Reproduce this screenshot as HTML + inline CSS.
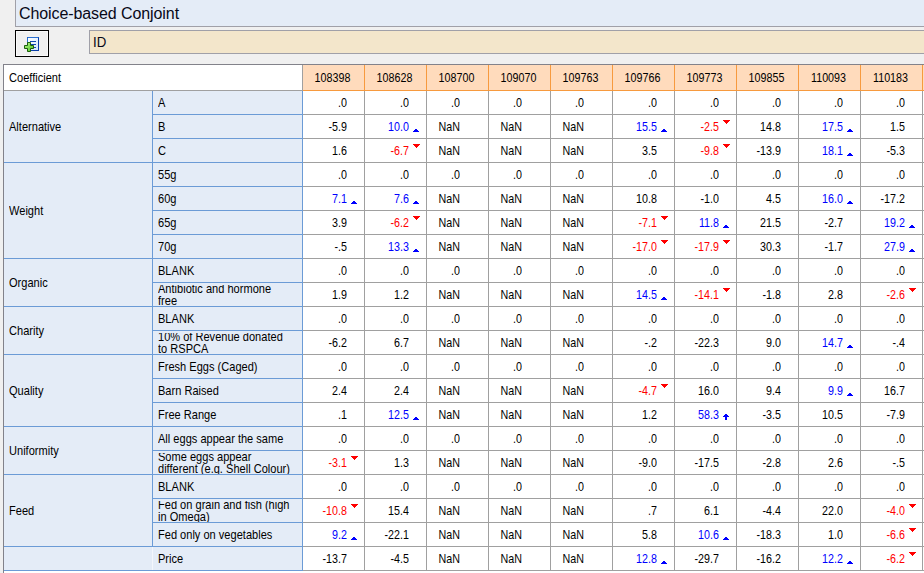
<!DOCTYPE html>
<html><head><meta charset="utf-8"><title>Choice-based Conjoint</title>
<style>
html,body{margin:0;padding:0;}
body{width:924px;height:573px;overflow:hidden;background:#f0f0f0;position:relative;font-family:"Liberation Sans",sans-serif;font-size:11px;color:#000;}
div{position:absolute;box-sizing:border-box;white-space:nowrap;}
.t{line-height:24px;height:24px;transform:scale(1.005,1.12);transform-origin:0 16px;}
.n{text-align:right;transform:scale(0.975,1.12);transform-origin:100% 16px;}
.c{text-align:center;transform:scale(0.975,1.12);transform-origin:50% 16px;}
.r{color:#ff0000;}
.b{color:#0000ff;}
.l2{line-height:12px;height:12px;transform:scale(1.005,1.12);transform-origin:0 10px;}
svg{position:absolute;overflow:visible;}
</style></head><body>

<div style="left:15px;top:0;width:909px;height:27px;background:#e4ecf7;border-left:1px solid #a0a0a8;border-bottom:1px solid #a0a0a8;"></div>
<div style="left:19px;top:4px;font-size:16px;line-height:20px;color:#080818;letter-spacing:-0.09px;">Choice-based Conjoint</div>
<div style="left:15px;top:30px;width:34px;height:27px;border:1px solid #000;background:#f0f0f0;"><div style="left:0;top:0;width:32px;height:25px;border:1px solid #fafafa;"></div></div>
<svg style="left:24px;top:37px;" width="15" height="15" viewBox="0 0 15 15">
<defs><linearGradient id="g1" x1="0" y1="0" x2="1" y2="1"><stop offset="0" stop-color="#ffffff"/><stop offset="1" stop-color="#cfe6ff"/></linearGradient>
<linearGradient id="g2" x1="0" y1="0" x2="1" y2="1"><stop offset="0" stop-color="#b4f58a"/><stop offset="1" stop-color="#4cc21e"/></linearGradient></defs>
<rect x="3.5" y="0.5" width="11" height="13" fill="url(#g1)" stroke="#0a3fa8"/>
<path d="M3.5 13.5V0.5H14.5" fill="none" stroke="#2a6fd0"/>
<path d="M6 4.5h6M6 7.5h6M6 10.5h6" stroke="#1048b0" stroke-width="1"/>
<path d="M3.5 5.5h3v3h3v3h-3v3h-3v-3h-3v-3h3z" fill="url(#g2)" stroke="#1b5e0a"/>
</svg>
<div style="left:89px;top:30px;width:840px;height:24px;background:#f3e6cb;border:1px solid #a0a0a8;"></div>
<div style="left:93px;top:35px;font-size:13px;line-height:16px;transform:scale(1.02,1.1);transform-origin:0 12px;color:#080818;">ID</div>
<div style="left:3px;top:64px;width:921px;height:509px;background:#fff;"></div>
<div style="left:4px;top:91px;width:298px;height:479px;background:#e4ecf7;"></div>
<div style="left:303px;top:65px;width:621px;height:25px;background:#ffdbbc;"></div>
<div style="left:3px;top:64px;width:921px;height:1px;background:#82828a;"></div>
<div style="left:3px;top:64px;width:1px;height:509px;background:#82828a;"></div>
<div style="left:4px;top:90px;width:299px;height:1px;background:#a0a0a0;"></div>
<div style="left:303px;top:90px;width:621px;height:1px;background:#f79a3e;"></div>
<div style="left:302px;top:65px;width:1px;height:26px;background:#a0a0a0;"></div>
<div style="left:364px;top:65px;width:1px;height:26px;background:#f79a3e;"></div>
<div style="left:426px;top:65px;width:1px;height:26px;background:#f79a3e;"></div>
<div style="left:488px;top:65px;width:1px;height:26px;background:#f79a3e;"></div>
<div style="left:550px;top:65px;width:1px;height:26px;background:#f79a3e;"></div>
<div style="left:612px;top:65px;width:1px;height:26px;background:#f79a3e;"></div>
<div style="left:674px;top:65px;width:1px;height:26px;background:#f79a3e;"></div>
<div style="left:736px;top:65px;width:1px;height:26px;background:#f79a3e;"></div>
<div style="left:798px;top:65px;width:1px;height:26px;background:#f79a3e;"></div>
<div style="left:860px;top:65px;width:1px;height:26px;background:#f79a3e;"></div>
<div style="left:922px;top:65px;width:1px;height:26px;background:#f79a3e;"></div>
<div style="left:302px;top:91px;width:1px;height:480px;background:#6b9bd6;"></div>
<div style="left:364px;top:91px;width:1px;height:480px;background:#a0a0a0;"></div>
<div style="left:426px;top:91px;width:1px;height:480px;background:#a0a0a0;"></div>
<div style="left:488px;top:91px;width:1px;height:480px;background:#a0a0a0;"></div>
<div style="left:550px;top:91px;width:1px;height:480px;background:#a0a0a0;"></div>
<div style="left:612px;top:91px;width:1px;height:480px;background:#a0a0a0;"></div>
<div style="left:674px;top:91px;width:1px;height:480px;background:#a0a0a0;"></div>
<div style="left:736px;top:91px;width:1px;height:480px;background:#a0a0a0;"></div>
<div style="left:798px;top:91px;width:1px;height:480px;background:#a0a0a0;"></div>
<div style="left:860px;top:91px;width:1px;height:480px;background:#a0a0a0;"></div>
<div style="left:922px;top:91px;width:1px;height:480px;background:#a0a0a0;"></div>
<div style="left:303px;top:114px;width:621px;height:1px;background:#a0a0a0;"></div>
<div style="left:153px;top:114px;width:150px;height:1px;background:#6b9bd6;"></div>
<div style="left:303px;top:138px;width:621px;height:1px;background:#a0a0a0;"></div>
<div style="left:153px;top:138px;width:150px;height:1px;background:#6b9bd6;"></div>
<div style="left:303px;top:162px;width:621px;height:1px;background:#a0a0a0;"></div>
<div style="left:153px;top:162px;width:150px;height:1px;background:#6b9bd6;"></div>
<div style="left:303px;top:186px;width:621px;height:1px;background:#a0a0a0;"></div>
<div style="left:153px;top:186px;width:150px;height:1px;background:#6b9bd6;"></div>
<div style="left:303px;top:210px;width:621px;height:1px;background:#a0a0a0;"></div>
<div style="left:153px;top:210px;width:150px;height:1px;background:#6b9bd6;"></div>
<div style="left:303px;top:234px;width:621px;height:1px;background:#a0a0a0;"></div>
<div style="left:153px;top:234px;width:150px;height:1px;background:#6b9bd6;"></div>
<div style="left:303px;top:258px;width:621px;height:1px;background:#a0a0a0;"></div>
<div style="left:153px;top:258px;width:150px;height:1px;background:#6b9bd6;"></div>
<div style="left:303px;top:282px;width:621px;height:1px;background:#a0a0a0;"></div>
<div style="left:153px;top:282px;width:150px;height:1px;background:#6b9bd6;"></div>
<div style="left:303px;top:306px;width:621px;height:1px;background:#a0a0a0;"></div>
<div style="left:153px;top:306px;width:150px;height:1px;background:#6b9bd6;"></div>
<div style="left:303px;top:330px;width:621px;height:1px;background:#a0a0a0;"></div>
<div style="left:153px;top:330px;width:150px;height:1px;background:#6b9bd6;"></div>
<div style="left:303px;top:354px;width:621px;height:1px;background:#a0a0a0;"></div>
<div style="left:153px;top:354px;width:150px;height:1px;background:#6b9bd6;"></div>
<div style="left:303px;top:378px;width:621px;height:1px;background:#a0a0a0;"></div>
<div style="left:153px;top:378px;width:150px;height:1px;background:#6b9bd6;"></div>
<div style="left:303px;top:402px;width:621px;height:1px;background:#a0a0a0;"></div>
<div style="left:153px;top:402px;width:150px;height:1px;background:#6b9bd6;"></div>
<div style="left:303px;top:426px;width:621px;height:1px;background:#a0a0a0;"></div>
<div style="left:153px;top:426px;width:150px;height:1px;background:#6b9bd6;"></div>
<div style="left:303px;top:450px;width:621px;height:1px;background:#a0a0a0;"></div>
<div style="left:153px;top:450px;width:150px;height:1px;background:#6b9bd6;"></div>
<div style="left:303px;top:474px;width:621px;height:1px;background:#a0a0a0;"></div>
<div style="left:153px;top:474px;width:150px;height:1px;background:#6b9bd6;"></div>
<div style="left:303px;top:498px;width:621px;height:1px;background:#a0a0a0;"></div>
<div style="left:153px;top:498px;width:150px;height:1px;background:#6b9bd6;"></div>
<div style="left:303px;top:522px;width:621px;height:1px;background:#a0a0a0;"></div>
<div style="left:153px;top:522px;width:150px;height:1px;background:#6b9bd6;"></div>
<div style="left:303px;top:546px;width:621px;height:1px;background:#a0a0a0;"></div>
<div style="left:153px;top:546px;width:150px;height:1px;background:#6b9bd6;"></div>
<div style="left:303px;top:570px;width:621px;height:1px;background:#a0a0a0;"></div>
<div style="left:153px;top:570px;width:150px;height:1px;background:#6b9bd6;"></div>
<div style="left:4px;top:162px;width:149px;height:1px;background:#6b9bd6;"></div>
<div style="left:4px;top:258px;width:149px;height:1px;background:#6b9bd6;"></div>
<div style="left:4px;top:306px;width:149px;height:1px;background:#6b9bd6;"></div>
<div style="left:4px;top:354px;width:149px;height:1px;background:#6b9bd6;"></div>
<div style="left:4px;top:426px;width:149px;height:1px;background:#6b9bd6;"></div>
<div style="left:4px;top:474px;width:149px;height:1px;background:#6b9bd6;"></div>
<div style="left:4px;top:546px;width:149px;height:1px;background:#6b9bd6;"></div>
<div style="left:4px;top:570px;width:149px;height:1px;background:#6b9bd6;"></div>
<div style="left:152px;top:91px;width:1px;height:456px;background:#6b9bd6;"></div>
<div style="left:152px;top:547px;width:1px;height:23px;background:#f4f7fc;"></div>
<div class="t" style="left:9px;top:66px;">Coefficient</div>
<div class="t c" style="left:302px;top:66px;width:61px;">108398</div>
<div class="t c" style="left:364px;top:66px;width:61px;">108628</div>
<div class="t c" style="left:426px;top:66px;width:61px;">108700</div>
<div class="t c" style="left:488px;top:66px;width:61px;">109070</div>
<div class="t c" style="left:550px;top:66px;width:61px;">109763</div>
<div class="t c" style="left:612px;top:66px;width:61px;">109766</div>
<div class="t c" style="left:674px;top:66px;width:61px;">109773</div>
<div class="t c" style="left:736px;top:66px;width:61px;">109855</div>
<div class="t c" style="left:798px;top:66px;width:61px;">110093</div>
<div class="t c" style="left:860px;top:66px;width:61px;">110183</div>
<div class="t" style="left:9px;top:115px;">Alternative</div>
<div class="t" style="left:9px;top:199px;">Weight</div>
<div class="t" style="left:9px;top:271px;">Organic</div>
<div class="t" style="left:9px;top:319px;">Charity</div>
<div class="t" style="left:9px;top:379px;">Quality</div>
<div class="t" style="left:9px;top:439px;">Uniformity</div>
<div class="t" style="left:9px;top:499px;">Feed</div>
<div class="t" style="left:158px;top:91px;">A</div>
<div class="t n " style="left:303px;top:91px;width:44px;">.0</div>
<div class="t n " style="left:365px;top:91px;width:44px;">.0</div>
<div class="t n " style="left:427px;top:91px;width:33px;">.0</div>
<div class="t n " style="left:489px;top:91px;width:33px;">.0</div>
<div class="t n " style="left:551px;top:91px;width:33px;">.0</div>
<div class="t n " style="left:613px;top:91px;width:44px;">.0</div>
<div class="t n " style="left:675px;top:91px;width:44px;">.0</div>
<div class="t n " style="left:737px;top:91px;width:44px;">.0</div>
<div class="t n " style="left:799px;top:91px;width:44px;">.0</div>
<div class="t n " style="left:861px;top:91px;width:44px;">.0</div>
<div class="t" style="left:158px;top:115px;">B</div>
<div class="t n " style="left:303px;top:115px;width:44px;">-5.9</div>
<div class="t n b" style="left:365px;top:115px;width:44px;">10.0</div>
<svg style="left:413px;top:129px;" width="6" height="3"><path d="M2 0h2v1h1v1h1v1h-6v-1h1v-1h1z" fill="#0000ff" shape-rendering="crispEdges"/></svg>
<div class="t n " style="left:427px;top:115px;width:33px;">NaN</div>
<div class="t n " style="left:489px;top:115px;width:33px;">NaN</div>
<div class="t n " style="left:551px;top:115px;width:33px;">NaN</div>
<div class="t n b" style="left:613px;top:115px;width:44px;">15.5</div>
<svg style="left:661px;top:129px;" width="6" height="3"><path d="M2 0h2v1h1v1h1v1h-6v-1h1v-1h1z" fill="#0000ff" shape-rendering="crispEdges"/></svg>
<div class="t n r" style="left:675px;top:115px;width:44px;">-2.5</div>
<svg style="left:723px;top:120px;" width="7" height="4"><path d="M0 0h7v1h-1v1h-1v1h-1v1h-1v-1h-1v-1h-1v-1h-1z" fill="#ff0000" shape-rendering="crispEdges"/></svg>
<div class="t n " style="left:737px;top:115px;width:44px;">14.8</div>
<div class="t n b" style="left:799px;top:115px;width:44px;">17.5</div>
<svg style="left:847px;top:129px;" width="6" height="3"><path d="M2 0h2v1h1v1h1v1h-6v-1h1v-1h1z" fill="#0000ff" shape-rendering="crispEdges"/></svg>
<div class="t n " style="left:861px;top:115px;width:44px;">1.5</div>
<div class="t" style="left:158px;top:139px;">C</div>
<div class="t n " style="left:303px;top:139px;width:44px;">1.6</div>
<div class="t n r" style="left:365px;top:139px;width:44px;">-6.7</div>
<svg style="left:413px;top:144px;" width="7" height="4"><path d="M0 0h7v1h-1v1h-1v1h-1v1h-1v-1h-1v-1h-1v-1h-1z" fill="#ff0000" shape-rendering="crispEdges"/></svg>
<div class="t n " style="left:427px;top:139px;width:33px;">NaN</div>
<div class="t n " style="left:489px;top:139px;width:33px;">NaN</div>
<div class="t n " style="left:551px;top:139px;width:33px;">NaN</div>
<div class="t n " style="left:613px;top:139px;width:44px;">3.5</div>
<div class="t n r" style="left:675px;top:139px;width:44px;">-9.8</div>
<svg style="left:723px;top:144px;" width="7" height="4"><path d="M0 0h7v1h-1v1h-1v1h-1v1h-1v-1h-1v-1h-1v-1h-1z" fill="#ff0000" shape-rendering="crispEdges"/></svg>
<div class="t n " style="left:737px;top:139px;width:44px;">-13.9</div>
<div class="t n b" style="left:799px;top:139px;width:44px;">18.1</div>
<svg style="left:847px;top:153px;" width="6" height="3"><path d="M2 0h2v1h1v1h1v1h-6v-1h1v-1h1z" fill="#0000ff" shape-rendering="crispEdges"/></svg>
<div class="t n " style="left:861px;top:139px;width:44px;">-5.3</div>
<div class="t" style="left:158px;top:163px;">55g</div>
<div class="t n " style="left:303px;top:163px;width:44px;">.0</div>
<div class="t n " style="left:365px;top:163px;width:44px;">.0</div>
<div class="t n " style="left:427px;top:163px;width:33px;">.0</div>
<div class="t n " style="left:489px;top:163px;width:33px;">.0</div>
<div class="t n " style="left:551px;top:163px;width:33px;">.0</div>
<div class="t n " style="left:613px;top:163px;width:44px;">.0</div>
<div class="t n " style="left:675px;top:163px;width:44px;">.0</div>
<div class="t n " style="left:737px;top:163px;width:44px;">.0</div>
<div class="t n " style="left:799px;top:163px;width:44px;">.0</div>
<div class="t n " style="left:861px;top:163px;width:44px;">.0</div>
<div class="t" style="left:158px;top:187px;">60g</div>
<div class="t n b" style="left:303px;top:187px;width:44px;">7.1</div>
<svg style="left:351px;top:201px;" width="6" height="3"><path d="M2 0h2v1h1v1h1v1h-6v-1h1v-1h1z" fill="#0000ff" shape-rendering="crispEdges"/></svg>
<div class="t n b" style="left:365px;top:187px;width:44px;">7.6</div>
<svg style="left:413px;top:201px;" width="6" height="3"><path d="M2 0h2v1h1v1h1v1h-6v-1h1v-1h1z" fill="#0000ff" shape-rendering="crispEdges"/></svg>
<div class="t n " style="left:427px;top:187px;width:33px;">NaN</div>
<div class="t n " style="left:489px;top:187px;width:33px;">NaN</div>
<div class="t n " style="left:551px;top:187px;width:33px;">NaN</div>
<div class="t n " style="left:613px;top:187px;width:44px;">10.8</div>
<div class="t n " style="left:675px;top:187px;width:44px;">-1.0</div>
<div class="t n " style="left:737px;top:187px;width:44px;">4.5</div>
<div class="t n b" style="left:799px;top:187px;width:44px;">16.0</div>
<svg style="left:847px;top:201px;" width="6" height="3"><path d="M2 0h2v1h1v1h1v1h-6v-1h1v-1h1z" fill="#0000ff" shape-rendering="crispEdges"/></svg>
<div class="t n " style="left:861px;top:187px;width:44px;">-17.2</div>
<div class="t" style="left:158px;top:211px;">65g</div>
<div class="t n " style="left:303px;top:211px;width:44px;">3.9</div>
<div class="t n r" style="left:365px;top:211px;width:44px;">-6.2</div>
<svg style="left:413px;top:216px;" width="7" height="4"><path d="M0 0h7v1h-1v1h-1v1h-1v1h-1v-1h-1v-1h-1v-1h-1z" fill="#ff0000" shape-rendering="crispEdges"/></svg>
<div class="t n " style="left:427px;top:211px;width:33px;">NaN</div>
<div class="t n " style="left:489px;top:211px;width:33px;">NaN</div>
<div class="t n " style="left:551px;top:211px;width:33px;">NaN</div>
<div class="t n r" style="left:613px;top:211px;width:44px;">-7.1</div>
<svg style="left:661px;top:216px;" width="7" height="4"><path d="M0 0h7v1h-1v1h-1v1h-1v1h-1v-1h-1v-1h-1v-1h-1z" fill="#ff0000" shape-rendering="crispEdges"/></svg>
<div class="t n b" style="left:675px;top:211px;width:44px;">11.8</div>
<svg style="left:723px;top:225px;" width="6" height="3"><path d="M2 0h2v1h1v1h1v1h-6v-1h1v-1h1z" fill="#0000ff" shape-rendering="crispEdges"/></svg>
<div class="t n " style="left:737px;top:211px;width:44px;">21.5</div>
<div class="t n " style="left:799px;top:211px;width:44px;">-2.7</div>
<div class="t n b" style="left:861px;top:211px;width:44px;">19.2</div>
<svg style="left:909px;top:225px;" width="6" height="3"><path d="M2 0h2v1h1v1h1v1h-6v-1h1v-1h1z" fill="#0000ff" shape-rendering="crispEdges"/></svg>
<div class="t" style="left:158px;top:235px;">70g</div>
<div class="t n " style="left:303px;top:235px;width:44px;">-.5</div>
<div class="t n b" style="left:365px;top:235px;width:44px;">13.3</div>
<svg style="left:413px;top:249px;" width="6" height="3"><path d="M2 0h2v1h1v1h1v1h-6v-1h1v-1h1z" fill="#0000ff" shape-rendering="crispEdges"/></svg>
<div class="t n " style="left:427px;top:235px;width:33px;">NaN</div>
<div class="t n " style="left:489px;top:235px;width:33px;">NaN</div>
<div class="t n " style="left:551px;top:235px;width:33px;">NaN</div>
<div class="t n r" style="left:613px;top:235px;width:44px;">-17.0</div>
<svg style="left:661px;top:240px;" width="7" height="4"><path d="M0 0h7v1h-1v1h-1v1h-1v1h-1v-1h-1v-1h-1v-1h-1z" fill="#ff0000" shape-rendering="crispEdges"/></svg>
<div class="t n r" style="left:675px;top:235px;width:44px;">-17.9</div>
<svg style="left:723px;top:240px;" width="7" height="4"><path d="M0 0h7v1h-1v1h-1v1h-1v1h-1v-1h-1v-1h-1v-1h-1z" fill="#ff0000" shape-rendering="crispEdges"/></svg>
<div class="t n " style="left:737px;top:235px;width:44px;">30.3</div>
<div class="t n " style="left:799px;top:235px;width:44px;">-1.7</div>
<div class="t n b" style="left:861px;top:235px;width:44px;">27.9</div>
<svg style="left:909px;top:249px;" width="6" height="3"><path d="M2 0h2v1h1v1h1v1h-6v-1h1v-1h1z" fill="#0000ff" shape-rendering="crispEdges"/></svg>
<div class="t" style="left:158px;top:259px;">BLANK</div>
<div class="t n " style="left:303px;top:259px;width:44px;">.0</div>
<div class="t n " style="left:365px;top:259px;width:44px;">.0</div>
<div class="t n " style="left:427px;top:259px;width:33px;">.0</div>
<div class="t n " style="left:489px;top:259px;width:33px;">.0</div>
<div class="t n " style="left:551px;top:259px;width:33px;">.0</div>
<div class="t n " style="left:613px;top:259px;width:44px;">.0</div>
<div class="t n " style="left:675px;top:259px;width:44px;">.0</div>
<div class="t n " style="left:737px;top:259px;width:44px;">.0</div>
<div class="t n " style="left:799px;top:259px;width:44px;">.0</div>
<div class="t n " style="left:861px;top:259px;width:44px;">.0</div>
<div style="left:153px;top:285px;width:149px;height:21px;overflow:hidden;"><div class="l2" style="left:5px;top:-2px;">Antibiotic and hormone</div><div class="l2" style="left:5px;top:10px;">free</div></div>
<div class="t n " style="left:303px;top:283px;width:44px;">1.9</div>
<div class="t n " style="left:365px;top:283px;width:44px;">1.2</div>
<div class="t n " style="left:427px;top:283px;width:33px;">NaN</div>
<div class="t n " style="left:489px;top:283px;width:33px;">NaN</div>
<div class="t n " style="left:551px;top:283px;width:33px;">NaN</div>
<div class="t n b" style="left:613px;top:283px;width:44px;">14.5</div>
<svg style="left:661px;top:297px;" width="6" height="3"><path d="M2 0h2v1h1v1h1v1h-6v-1h1v-1h1z" fill="#0000ff" shape-rendering="crispEdges"/></svg>
<div class="t n r" style="left:675px;top:283px;width:44px;">-14.1</div>
<svg style="left:723px;top:288px;" width="7" height="4"><path d="M0 0h7v1h-1v1h-1v1h-1v1h-1v-1h-1v-1h-1v-1h-1z" fill="#ff0000" shape-rendering="crispEdges"/></svg>
<div class="t n " style="left:737px;top:283px;width:44px;">-1.8</div>
<div class="t n " style="left:799px;top:283px;width:44px;">2.8</div>
<div class="t n r" style="left:861px;top:283px;width:44px;">-2.6</div>
<svg style="left:909px;top:288px;" width="7" height="4"><path d="M0 0h7v1h-1v1h-1v1h-1v1h-1v-1h-1v-1h-1v-1h-1z" fill="#ff0000" shape-rendering="crispEdges"/></svg>
<div class="t" style="left:158px;top:307px;">BLANK</div>
<div class="t n " style="left:303px;top:307px;width:44px;">.0</div>
<div class="t n " style="left:365px;top:307px;width:44px;">.0</div>
<div class="t n " style="left:427px;top:307px;width:33px;">.0</div>
<div class="t n " style="left:489px;top:307px;width:33px;">.0</div>
<div class="t n " style="left:551px;top:307px;width:33px;">.0</div>
<div class="t n " style="left:613px;top:307px;width:44px;">.0</div>
<div class="t n " style="left:675px;top:307px;width:44px;">.0</div>
<div class="t n " style="left:737px;top:307px;width:44px;">.0</div>
<div class="t n " style="left:799px;top:307px;width:44px;">.0</div>
<div class="t n " style="left:861px;top:307px;width:44px;">.0</div>
<div style="left:153px;top:333px;width:149px;height:21px;overflow:hidden;"><div class="l2" style="left:5px;top:-2px;">10% of Revenue donated</div><div class="l2" style="left:5px;top:10px;">to RSPCA</div></div>
<div class="t n " style="left:303px;top:331px;width:44px;">-6.2</div>
<div class="t n " style="left:365px;top:331px;width:44px;">6.7</div>
<div class="t n " style="left:427px;top:331px;width:33px;">NaN</div>
<div class="t n " style="left:489px;top:331px;width:33px;">NaN</div>
<div class="t n " style="left:551px;top:331px;width:33px;">NaN</div>
<div class="t n " style="left:613px;top:331px;width:44px;">-.2</div>
<div class="t n " style="left:675px;top:331px;width:44px;">-22.3</div>
<div class="t n " style="left:737px;top:331px;width:44px;">9.0</div>
<div class="t n b" style="left:799px;top:331px;width:44px;">14.7</div>
<svg style="left:847px;top:345px;" width="6" height="3"><path d="M2 0h2v1h1v1h1v1h-6v-1h1v-1h1z" fill="#0000ff" shape-rendering="crispEdges"/></svg>
<div class="t n " style="left:861px;top:331px;width:44px;">-.4</div>
<div class="t" style="left:158px;top:355px;">Fresh Eggs (Caged)</div>
<div class="t n " style="left:303px;top:355px;width:44px;">.0</div>
<div class="t n " style="left:365px;top:355px;width:44px;">.0</div>
<div class="t n " style="left:427px;top:355px;width:33px;">.0</div>
<div class="t n " style="left:489px;top:355px;width:33px;">.0</div>
<div class="t n " style="left:551px;top:355px;width:33px;">.0</div>
<div class="t n " style="left:613px;top:355px;width:44px;">.0</div>
<div class="t n " style="left:675px;top:355px;width:44px;">.0</div>
<div class="t n " style="left:737px;top:355px;width:44px;">.0</div>
<div class="t n " style="left:799px;top:355px;width:44px;">.0</div>
<div class="t n " style="left:861px;top:355px;width:44px;">.0</div>
<div class="t" style="left:158px;top:379px;">Barn Raised</div>
<div class="t n " style="left:303px;top:379px;width:44px;">2.4</div>
<div class="t n " style="left:365px;top:379px;width:44px;">2.4</div>
<div class="t n " style="left:427px;top:379px;width:33px;">NaN</div>
<div class="t n " style="left:489px;top:379px;width:33px;">NaN</div>
<div class="t n " style="left:551px;top:379px;width:33px;">NaN</div>
<div class="t n r" style="left:613px;top:379px;width:44px;">-4.7</div>
<svg style="left:661px;top:384px;" width="7" height="4"><path d="M0 0h7v1h-1v1h-1v1h-1v1h-1v-1h-1v-1h-1v-1h-1z" fill="#ff0000" shape-rendering="crispEdges"/></svg>
<div class="t n " style="left:675px;top:379px;width:44px;">16.0</div>
<div class="t n " style="left:737px;top:379px;width:44px;">9.4</div>
<div class="t n b" style="left:799px;top:379px;width:44px;">9.9</div>
<svg style="left:847px;top:393px;" width="6" height="3"><path d="M2 0h2v1h1v1h1v1h-6v-1h1v-1h1z" fill="#0000ff" shape-rendering="crispEdges"/></svg>
<div class="t n " style="left:861px;top:379px;width:44px;">16.7</div>
<div class="t" style="left:158px;top:403px;">Free Range</div>
<div class="t n " style="left:303px;top:403px;width:44px;">.1</div>
<div class="t n b" style="left:365px;top:403px;width:44px;">12.5</div>
<svg style="left:413px;top:417px;" width="6" height="3"><path d="M2 0h2v1h1v1h1v1h-6v-1h1v-1h1z" fill="#0000ff" shape-rendering="crispEdges"/></svg>
<div class="t n " style="left:427px;top:403px;width:33px;">NaN</div>
<div class="t n " style="left:489px;top:403px;width:33px;">NaN</div>
<div class="t n " style="left:551px;top:403px;width:33px;">NaN</div>
<div class="t n " style="left:613px;top:403px;width:44px;">1.2</div>
<div class="t n b" style="left:675px;top:403px;width:44px;">58.3</div>
<svg style="left:723px;top:414px;" width="6" height="6"><path d="M2 0h2v1h1v1h1v1h-2v3h-2v-3h-2v-1h1v-1h1z" fill="#0000ff" shape-rendering="crispEdges"/></svg>
<div class="t n " style="left:737px;top:403px;width:44px;">-3.5</div>
<div class="t n " style="left:799px;top:403px;width:44px;">10.5</div>
<div class="t n " style="left:861px;top:403px;width:44px;">-7.9</div>
<div class="t" style="left:158px;top:427px;">All eggs appear the same</div>
<div class="t n " style="left:303px;top:427px;width:44px;">.0</div>
<div class="t n " style="left:365px;top:427px;width:44px;">.0</div>
<div class="t n " style="left:427px;top:427px;width:33px;">.0</div>
<div class="t n " style="left:489px;top:427px;width:33px;">.0</div>
<div class="t n " style="left:551px;top:427px;width:33px;">.0</div>
<div class="t n " style="left:613px;top:427px;width:44px;">.0</div>
<div class="t n " style="left:675px;top:427px;width:44px;">.0</div>
<div class="t n " style="left:737px;top:427px;width:44px;">.0</div>
<div class="t n " style="left:799px;top:427px;width:44px;">.0</div>
<div class="t n " style="left:861px;top:427px;width:44px;">.0</div>
<div style="left:153px;top:453px;width:149px;height:21px;overflow:hidden;"><div class="l2" style="left:5px;top:-2px;">Some eggs appear</div><div class="l2" style="left:5px;top:10px;">different (e.g. Shell Colour)</div></div>
<div class="t n r" style="left:303px;top:451px;width:44px;">-3.1</div>
<svg style="left:351px;top:456px;" width="7" height="4"><path d="M0 0h7v1h-1v1h-1v1h-1v1h-1v-1h-1v-1h-1v-1h-1z" fill="#ff0000" shape-rendering="crispEdges"/></svg>
<div class="t n " style="left:365px;top:451px;width:44px;">1.3</div>
<div class="t n " style="left:427px;top:451px;width:33px;">NaN</div>
<div class="t n " style="left:489px;top:451px;width:33px;">NaN</div>
<div class="t n " style="left:551px;top:451px;width:33px;">NaN</div>
<div class="t n " style="left:613px;top:451px;width:44px;">-9.0</div>
<div class="t n " style="left:675px;top:451px;width:44px;">-17.5</div>
<div class="t n " style="left:737px;top:451px;width:44px;">-2.8</div>
<div class="t n " style="left:799px;top:451px;width:44px;">2.6</div>
<div class="t n " style="left:861px;top:451px;width:44px;">-.5</div>
<div class="t" style="left:158px;top:475px;">BLANK</div>
<div class="t n " style="left:303px;top:475px;width:44px;">.0</div>
<div class="t n " style="left:365px;top:475px;width:44px;">.0</div>
<div class="t n " style="left:427px;top:475px;width:33px;">.0</div>
<div class="t n " style="left:489px;top:475px;width:33px;">.0</div>
<div class="t n " style="left:551px;top:475px;width:33px;">.0</div>
<div class="t n " style="left:613px;top:475px;width:44px;">.0</div>
<div class="t n " style="left:675px;top:475px;width:44px;">.0</div>
<div class="t n " style="left:737px;top:475px;width:44px;">.0</div>
<div class="t n " style="left:799px;top:475px;width:44px;">.0</div>
<div class="t n " style="left:861px;top:475px;width:44px;">.0</div>
<div style="left:153px;top:501px;width:149px;height:21px;overflow:hidden;"><div class="l2" style="left:5px;top:-2px;">Fed on grain and fish (high</div><div class="l2" style="left:5px;top:10px;">in Omega)</div></div>
<div class="t n r" style="left:303px;top:499px;width:44px;">-10.8</div>
<svg style="left:351px;top:504px;" width="7" height="4"><path d="M0 0h7v1h-1v1h-1v1h-1v1h-1v-1h-1v-1h-1v-1h-1z" fill="#ff0000" shape-rendering="crispEdges"/></svg>
<div class="t n " style="left:365px;top:499px;width:44px;">15.4</div>
<div class="t n " style="left:427px;top:499px;width:33px;">NaN</div>
<div class="t n " style="left:489px;top:499px;width:33px;">NaN</div>
<div class="t n " style="left:551px;top:499px;width:33px;">NaN</div>
<div class="t n " style="left:613px;top:499px;width:44px;">.7</div>
<div class="t n " style="left:675px;top:499px;width:44px;">6.1</div>
<div class="t n " style="left:737px;top:499px;width:44px;">-4.4</div>
<div class="t n " style="left:799px;top:499px;width:44px;">22.0</div>
<div class="t n r" style="left:861px;top:499px;width:44px;">-4.0</div>
<svg style="left:909px;top:504px;" width="7" height="4"><path d="M0 0h7v1h-1v1h-1v1h-1v1h-1v-1h-1v-1h-1v-1h-1z" fill="#ff0000" shape-rendering="crispEdges"/></svg>
<div class="t" style="left:158px;top:523px;">Fed only on vegetables</div>
<div class="t n b" style="left:303px;top:523px;width:44px;">9.2</div>
<svg style="left:351px;top:537px;" width="6" height="3"><path d="M2 0h2v1h1v1h1v1h-6v-1h1v-1h1z" fill="#0000ff" shape-rendering="crispEdges"/></svg>
<div class="t n " style="left:365px;top:523px;width:44px;">-22.1</div>
<div class="t n " style="left:427px;top:523px;width:33px;">NaN</div>
<div class="t n " style="left:489px;top:523px;width:33px;">NaN</div>
<div class="t n " style="left:551px;top:523px;width:33px;">NaN</div>
<div class="t n " style="left:613px;top:523px;width:44px;">5.8</div>
<div class="t n b" style="left:675px;top:523px;width:44px;">10.6</div>
<svg style="left:723px;top:537px;" width="6" height="3"><path d="M2 0h2v1h1v1h1v1h-6v-1h1v-1h1z" fill="#0000ff" shape-rendering="crispEdges"/></svg>
<div class="t n " style="left:737px;top:523px;width:44px;">-18.3</div>
<div class="t n " style="left:799px;top:523px;width:44px;">1.0</div>
<div class="t n r" style="left:861px;top:523px;width:44px;">-6.6</div>
<svg style="left:909px;top:528px;" width="7" height="4"><path d="M0 0h7v1h-1v1h-1v1h-1v1h-1v-1h-1v-1h-1v-1h-1z" fill="#ff0000" shape-rendering="crispEdges"/></svg>
<div class="t" style="left:158px;top:547px;">Price</div>
<div class="t n " style="left:303px;top:547px;width:44px;">-13.7</div>
<div class="t n " style="left:365px;top:547px;width:44px;">-4.5</div>
<div class="t n " style="left:427px;top:547px;width:33px;">NaN</div>
<div class="t n " style="left:489px;top:547px;width:33px;">NaN</div>
<div class="t n " style="left:551px;top:547px;width:33px;">NaN</div>
<div class="t n b" style="left:613px;top:547px;width:44px;">12.8</div>
<svg style="left:661px;top:561px;" width="6" height="3"><path d="M2 0h2v1h1v1h1v1h-6v-1h1v-1h1z" fill="#0000ff" shape-rendering="crispEdges"/></svg>
<div class="t n " style="left:675px;top:547px;width:44px;">-29.7</div>
<div class="t n " style="left:737px;top:547px;width:44px;">-16.2</div>
<div class="t n b" style="left:799px;top:547px;width:44px;">12.2</div>
<svg style="left:847px;top:561px;" width="6" height="3"><path d="M2 0h2v1h1v1h1v1h-6v-1h1v-1h1z" fill="#0000ff" shape-rendering="crispEdges"/></svg>
<div class="t n r" style="left:861px;top:547px;width:44px;">-6.2</div>
<svg style="left:909px;top:552px;" width="7" height="4"><path d="M0 0h7v1h-1v1h-1v1h-1v1h-1v-1h-1v-1h-1v-1h-1z" fill="#ff0000" shape-rendering="crispEdges"/></svg>
</body></html>
